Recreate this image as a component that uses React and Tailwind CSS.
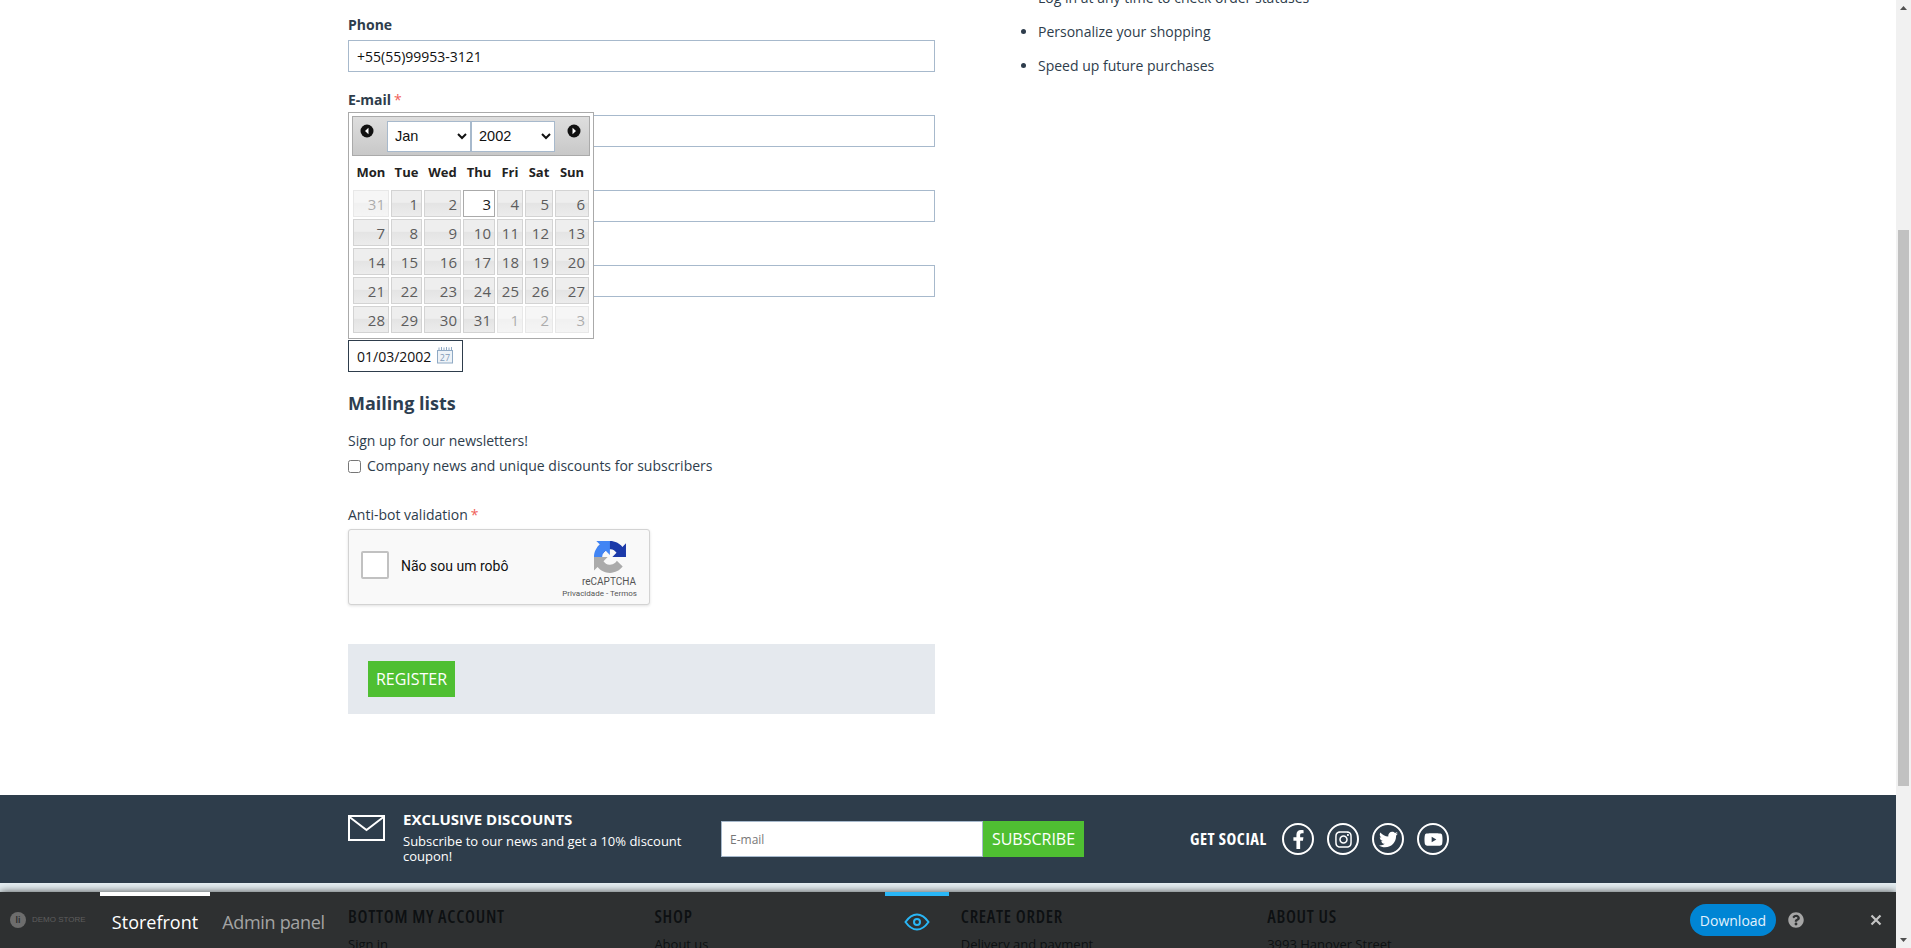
import React from "react";
import { FaFacebookF, FaInstagram, FaTwitter, FaYoutube, FaQuestionCircle } from "react-icons/fa";

const widths = "grid grid-cols-[36px_31px_37px_32px_26px_28px_34px] gap-[2px]";
const days = ["Mon", "Tue", "Wed", "Thu", "Fri", "Sat", "Sun"];
const cells = [31, 1, 2, 3, 4, 5, 6, 7, 8, 9, 10, 11, 12, 13, 14, 15, 16, 17, 18, 19, 20, 21, 22, 23, 24, 25, 26, 27, 28, 29, 30, 31, 1, 2, 3];

function Field({ label, required, value, className = "w-[587px]" }) {
  return (
    <div className="mb-[18px]">
      <label className="block h-[20px] mb-[5px] text-[14px] leading-[20px] font-bold text-[#2e3d4c]">
        {label}
        {required && <span className="ml-[3px] font-normal text-[#f0605a]">*</span>}
      </label>
      <input
        readOnly
        value={value || ""}
        className={`${className} block h-[32px] px-[8px] border border-[#a7b9cc] bg-white text-[14px] text-[#111] outline-none`}
      />
    </div>
  );
}

function NavIcon({ dir }) {
  return (
    <svg width="14" height="14" viewBox="0 0 14 14" className="mt-[-10px]">
      <circle cx="7" cy="7" r="6.5" fill="#111" />
      {dir === "l" ? <path d="M8.5 3.8v6.4L5 7z" fill="#fff" /> : <path d="M5.5 3.8v6.4L9 7z" fill="#fff" />}
    </svg>
  );
}

function Datepicker() {
  return (
    <div className="absolute left-0 top-[112px] z-10 w-[246px] h-[227px] border border-[#aaaaaa] bg-white p-[3px] font-['Open_Sans',sans-serif]">
      <div className="flex items-center h-[40px] border border-[#aaaaaa] bg-gradient-to-b from-[#dedede] to-[#c8c8c8] pl-[7px]">
        <NavIcon dir="l" />
        <select defaultValue="Jan" className="ml-[13px] w-[84px] h-[31px] pl-[3px] border border-[#a7b9cc] bg-white text-[14.5px] text-[#111] font-['Liberation_Sans',sans-serif] outline-none">
          <option>Jan</option>
        </select>
        <select defaultValue="2002" className="w-[84px] h-[31px] pl-[3px] border border-[#a7b9cc] bg-white text-[14.5px] text-[#111] font-['Liberation_Sans',sans-serif] outline-none">
          <option>2002</option>
        </select>
        <span className="ml-[12px] flex"><NavIcon dir="r" /></span>
      </div>
      <div className={`${widths} mt-[3px] h-[27px] pl-[1px] items-center text-center text-[13px] font-bold text-[#222]`}>
        {days.map((d) => (
          <span key={d}>{d}</span>
        ))}
      </div>
      <div className={`${widths} mt-[4px] pl-[1px]`}>
        {cells.map((n, i) => {
          const other = i === 0 || i > 31;
          const today = i === 3;
          return (
            <div
              key={i}
              className={`h-[27px] pr-[3px] border text-right text-[15px] leading-[26px] ${
                today
                  ? "border-[#aaaaaa] bg-white text-[#212121]"
                  : "border-[#d3d3d3] bg-[linear-gradient(180deg,#eeeeee_0%,#eeeeee_45%,#e4e4e4_50%,#ececec_100%)] text-[#5c5c5c]"
              } ${other ? "opacity-50" : ""}`}
            >
              {n}
            </div>
          );
        })}
      </div>
    </div>
  );
}

function Recaptcha() {
  return (
    <div className="flex w-[302px] h-[76px] rounded-[3px] border border-[#d3d3d3] bg-[#f9f9f9] shadow-[0_1px_3px_rgba(0,0,0,0.12)] font-['Roboto',sans-serif]">
      <div className="ml-[12px] mt-[21px] w-[28px] h-[28px] rounded-[2px] border-2 border-[#c1c1c1] bg-white" />
      <span className="ml-[12px] mt-[26px] text-[14px] leading-[20px] text-[#111]">Não sou um robô</span>
      <div className="ml-auto mr-[12px] flex w-[80px] flex-col items-end pt-[11px]">
        <svg width="32" height="32" viewBox="0 0 64 64" className="mr-[11px]">
          <path fill="#1c3aa9" d="M64 31.955l-.033-1.37V4.687l-7.16 7.16C50.948 4.674 42.033.093 32.05.093c-10.4 0-19.622 4.96-25.458 12.64l11.736 11.86a15.55 15.55 0 0 1 4.754-5.334c2.05-1.6 4.952-2.906 8.968-2.906.485 0 .86.057 1.135.163 4.976.393 9.288 3.14 11.828 7.124l-8.307 8.307L63.96 32" />
          <path fill="#4285f4" d="M31.862 0l-1.37.033H4.594l7.16 7.16C4.58 13.052 0 21.967 0 31.95c0 1.5.1 2.9.3 4.3l16-.3c-.05-.5-.1-1-.1-1.5 0-.485.057-2.86.163-3.135.393-4.976 3.14-9.288 7.124-11.828l8.307 8.307L31.907.04" />
          <path fill="#ababab" d="M.001 31.955l.033 1.37v25.9l7.16-7.16c5.86 7.173 14.774 11.754 24.76 11.754 10.4 0 19.622-4.96 25.458-12.64l-11.736-11.86a15.55 15.55 0 0 1-4.754 5.334c-2.05 1.6-4.952 2.906-8.968 2.906-.485 0-.86-.057-1.135-.163-4.976-.393-9.288-3.14-11.828-7.124l8.307-8.307L.041 31.91" />
        </svg>
        <span className="mt-[3px] mr-[1px] text-[10px] leading-[12px] text-[#555]">reCAPTCHA</span>
        <span className="mt-[1px] whitespace-nowrap text-[8px] leading-[10px] text-[#555]">Privacidade - Termos</span>
      </div>
    </div>
  );
}

function CalendarIcon() {
  return (
    <svg width="18" height="18" viewBox="0 0 18 18" className="absolute right-[9px] top-[6px]">
      <rect x="1.5" y="4.5" width="15" height="12.5" fill="#eef3f8" stroke="#8fa9c4" />
      <path d="M3 1.5v3M5.5 1v3.5M8 1.5v3M10.5 1v3.5M13 1.5v3M15.5 1v3.5" stroke="#8fa9c4" strokeWidth="1" />
      <text x="9" y="15" textAnchor="middle" fontSize="9" fill="#7f9ab6" fontFamily="Open Sans, sans-serif">27</text>
    </svg>
  );
}

function Social({ children }) {
  return (
    <span className="flex items-center justify-center w-[32px] h-[32px] rounded-full border-2 border-white text-white text-[19px]">
      {children}
    </span>
  );
}

function FootCol({ title, link }) {
  return (
    <div className="w-[306.4px]">
      <h4 className="text-[17.5px] leading-[22px] font-semibold [font-stretch:75%] tracking-[0.75px] text-[#2e3d4c] whitespace-nowrap">{title}</h4>
      <p className="mt-[7px] text-[13px] leading-[20px] text-[#2e3d4c] whitespace-nowrap">{link}</p>
    </div>
  );
}

export default function App() {
  return (
    <div className="flex h-screen overflow-hidden bg-white font-['Open_Sans',sans-serif] text-[#2e3d4c]">
      <main className="relative flex-1 min-w-0 flex flex-col overflow-hidden">
        <section className="flex h-[795px] shrink-0 pl-[348px]">
          <div className="relative w-[587px] pt-[15px]">
            <Field label="Phone" value="+55(55)99953-3121" />
            <Field label="E-mail" required />
            <Field />
            <Field />
            <Field value="01/03/2002" className="w-[115px] !border-[#2e3d4c]" />
            <div className="absolute left-0 top-[340px] w-[115px] h-[32px] pointer-events-none"><CalendarIcon /></div>
            <Datepicker />

            <h2 className="mt-[19px] text-[18px] leading-[24px] font-bold text-[#2d3e50]">Mailing lists</h2>
            <p className="mt-[16px] text-[14px] leading-[20px]">Sign up for our newsletters!</p>
            <label className="mt-[5px] flex items-center text-[14px] leading-[20px]">
              <input type="checkbox" className="w-[13px] h-[13px] mr-[6px]" />
              Company news and unique discounts for subscribers
            </label>
            <p className="mt-[29px] mb-[4px] text-[14px] leading-[20px]">
              Anti-bot validation<span className="ml-[3px] text-[#f0605a]">*</span>
            </p>
            <Recaptcha />
            <div className="mt-[39px] h-[70px] bg-[#e5e9ee] pl-[20px] pt-[17px]">
              <button className="w-[87px] h-[36px] bg-[#4fbf32] text-white text-[16px] font-normal">REGISTER</button>
            </div>
          </div>
          <ul className="ml-[88px] mt-[-12px] list-disc pl-[15px] text-[14px] leading-[20px] marker:text-[#2e3d4c]">
            <li className="mb-[14px]">Log in at any time to check order statuses</li>
            <li className="mb-[14px]">Personalize your shopping</li>
            <li>Speed up future purchases</li>
          </ul>
        </section>

        <section className="flex h-[88px] shrink-0 bg-[#2e3d4b] pl-[348px] text-white">
          <div className="flex w-[373px]">
            <svg width="37" height="26" viewBox="0 0 37 26" className="mt-[20px] shrink-0">
              <rect x="1" y="1" width="35" height="24" fill="none" stroke="#fff" strokeWidth="2" />
              <path d="M1.5 2l17 13 17-13" fill="none" stroke="#fff" strokeWidth="2" />
            </svg>
            <div className="ml-[18px] w-[291px] pt-[14px]">
              <h3 className="text-[15px] leading-[20px] font-bold">EXCLUSIVE DISCOUNTS</h3>
              <p className="mt-[5px] text-[13px] leading-[15px]">Subscribe to our news and get a 10% discount coupon!</p>
            </div>
          </div>
          <div className="flex mt-[26px] h-[36px]">
            <input
              placeholder="E-mail"
              className="w-[262px] h-[36px] px-[8px] border border-[#a7b9cc] bg-white text-[12px] text-[#111] placeholder:text-[#777] outline-none"
            />
            <button className="w-[101px] h-[36px] bg-[#4fbf32] text-white text-[16px]">SUBSCRIBE</button>
          </div>
          <div className="flex items-center gap-[13px] ml-[106px] mt-[28px] h-[32px]">
            <span className="w-[79px] text-[16.5px] font-bold [font-stretch:75%] tracking-[0.55px] whitespace-nowrap">GET SOCIAL</span>
            <Social><FaFacebookF /></Social>
            <Social><FaInstagram /></Social>
            <Social><FaTwitter /></Social>
            <Social><FaYoutube /></Social>
          </div>
        </section>

        <section className="flex flex-1 bg-[#e4edf1] pl-[348px] pt-[22px]">
          <FootCol title="BOTTOM MY ACCOUNT" link="Sign in" />
          <FootCol title="SHOP" link="About us" />
          <FootCol title="CREATE ORDER" link="Delivery and payment" />
          <FootCol title="ABOUT US" link="3993 Hanover Street" />
        </section>

        <div className="absolute inset-x-0 bottom-0 z-20 flex h-[56px] items-stretch bg-[#060606]/82 shadow-[0_0_8px_rgba(0,0,0,0.7)]">
          <div className="flex w-[100px] items-center pl-[10px]">
            <span className="flex h-[16px] w-[16px] items-center justify-center rounded-full bg-[#6d6d6d] text-[8px] font-bold text-[#2e2e2e]">li</span>
            <span className="ml-[6px] whitespace-nowrap text-[8px] text-[#5e5e5e] font-['Liberation_Sans',sans-serif]">DEMO STORE</span>
          </div>
          <div className="flex w-[110px] items-center justify-center border-t-4 border-white text-[18px] text-white">Storefront</div>
          <div className="flex w-[127px] items-center justify-center border-t-4 border-transparent text-[18px] tracking-[-0.3px] text-[#a3a3a3]">Admin panel</div>
          <div className="ml-[548px] flex w-[64px] items-center justify-center border-t-4 border-[#29b6f6]">
            <svg width="26" height="18" viewBox="0 0 26 18" fill="none" stroke="#29b6f6" strokeWidth="2">
              <path d="M1.5 9C5 4 9 1.5 13 1.5S21 4 24.5 9C21 14 17 16.5 13 16.5S5 14 1.5 9z" />
              <circle cx="13" cy="9" r="3" />
            </svg>
          </div>
          <div className="ml-auto flex items-center pr-[14px]">
            <button className="h-[32px] w-[86px] rounded-full bg-[#0085d4] text-[14px] text-[#e3f2fd]">Download</button>
            <FaQuestionCircle className="ml-[12px] text-[16px] text-[#a6a6a6]" />
            <svg width="12" height="12" viewBox="0 0 12 12" className="ml-[66px]" stroke="#c4c4c4" strokeWidth="2.2">
              <path d="M1.5 1.5l9 9M10.5 1.5l-9 9" />
            </svg>
          </div>
        </div>
      </main>

      <aside className="flex w-[15px] shrink-0 flex-col items-center bg-[#f1f1f1]">
        <svg width="7" height="4" viewBox="0 0 7 4" className="mt-[6px]"><path d="M3.5 0L7 4H0z" fill="#505050" /></svg>
        <div className="mt-[220px] h-[556px] w-[11px] bg-[#c1c1c1]" />
        <svg width="7" height="4" viewBox="0 0 7 4" className="mt-[152px]"><path d="M3.5 4L7 0H0z" fill="#505050" /></svg>
      </aside>
    </div>
  );
}
